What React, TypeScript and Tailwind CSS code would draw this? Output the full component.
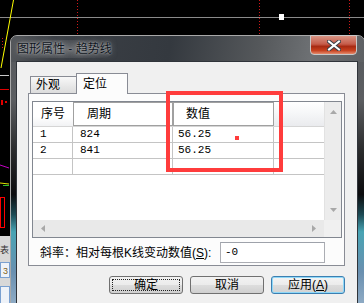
import React from "react";

const cjk = "font-['Liberation_Sans','Noto_Sans_CJK_SC',sans-serif]";

function ChartBackdrop() {
  return (
    <svg className="absolute inset-0" width="364" height="303">
      <line x1="0" y1="17.5" x2="364" y2="17.5" stroke="#8a8a8a" />
      <rect x="279" y="14" width="5" height="6" fill="#ffffff" />
      <line x1="13.5" y1="0" x2="1" y2="68" stroke="#ffff00" />
      <line x1="77.5" y1="0" x2="77.5" y2="34" stroke="#d01818" strokeDasharray="1 2" />
      <line x1="259.5" y1="0" x2="259.5" y2="34" stroke="#d01818" strokeDasharray="1 2" />
      <line x1="349.5" y1="0" x2="349.5" y2="34" stroke="#d01818" strokeDasharray="1 2" />
      <line x1="2.5" y1="38" x2="2.5" y2="48" stroke="#d01818" strokeDasharray="1 2" />
      <line x1="0" y1="75.5" x2="9" y2="75.5" stroke="#c8c8c8" />
      <line x1="0" y1="89.5" x2="9" y2="89.5" stroke="#e00000" />
      <rect x="1" y="100" width="2" height="5" fill="#e00000" />
      <rect x="5" y="101" width="2" height="2" fill="#e00000" />
      <polyline points="0,165 9,168" stroke="#c000c0" fill="none" />
      <polyline points="0,183 9,184" stroke="#e0e000" fill="none" />
      <polyline points="3,185.5 9,185.5" stroke="#30c030" fill="none" />
      <rect x="0.5" y="197.5" width="4" height="30" stroke="#ff0000" fill="none" />
      <rect x="0" y="236" width="10" height="67" fill="#d8d8d8" />
      <text x="0" y="253" fontSize="9" fill="#333" fontFamily="Noto Sans CJK SC">表</text>
      <rect x="0.5" y="262.5" width="9" height="15" stroke="#7aa0d0" fill="#eef2f8" />
      <text x="3" y="274" fontSize="9" fill="#806020" fontFamily="Liberation Sans">3</text>
      <rect x="0.5" y="286.5" width="9" height="17" stroke="#7aa0d0" fill="#eef2f8" />
    </svg>
  );
}

function CloseButton() {
  return (
    <div className="absolute left-[299px] top-[-1px] flex h-[20px] w-[47px] items-center justify-center rounded-b-[4px] border border-[#c8c8c8] bg-[linear-gradient(180deg,#d89484_0%,#c65c4a_45%,#a82a12_58%,#c6401e_80%,#e48a6c_100%)]">
      <svg width="14" height="11" viewBox="0 0 14 11">
        <path d="M2 1.5 L12 9.5 M12 1.5 L2 9.5" stroke="#3a4048" strokeWidth="4" strokeLinecap="square" />
        <path d="M2 1.5 L12 9.5 M12 1.5 L2 9.5" stroke="#ffffff" strokeWidth="2" strokeLinecap="square" />
      </svg>
    </div>
  );
}

function ListView() {
  const rows = [
    ["1", "824", "56.25"],
    ["2", "841", "56.25"],
    ["", "", ""],
  ];
  return (
    <div className="flex h-[137px] w-[310px] border border-[#828790] bg-white">
      <div className="flex w-[291px] flex-col">
        {/* header */}
        <div className="flex h-[25px] border-b border-[#d5d5d5] text-[12px] text-black">
          <div className="flex w-[40px] items-center bg-[linear-gradient(180deg,#ffffff_0%,#ffffff_60%,#f1f2f4_100%)] pl-[8px]">
            序号
          </div>
          <div className="flex w-[100px] items-center border border-[#a0a0a0] bg-white pl-[13px]">
            周期
          </div>
          <div className="flex w-[101px] items-center border border-[#a0a0a0] bg-white pl-[12px]">
            数值
          </div>
          <div className="flex-1 bg-[linear-gradient(180deg,#ffffff_0%,#f7f8f9_40%,#eaebee_100%)]" />
        </div>
        {/* rows */}
        <div className="flex-1">
          {rows.map((r, i) => (
            <div
              key={i}
              className="flex h-[16px] border-b border-[#c4c4c4] font-['Liberation_Mono',monospace] text-[11px] leading-[15px] text-black"
            >
              <div className="w-[40px] border-r border-[#c4c4c4] pl-[7px]">{r[0]}</div>
              <div className="w-[100px] border-r border-[#c4c4c4] pl-[7px]">{r[1]}</div>
              <div className="w-[101px] border-r border-[#c4c4c4] pl-[5px]">{r[2]}</div>
            </div>
          ))}
        </div>
        {/* horizontal scrollbar */}
        <div className="flex h-[17px] items-center justify-between bg-[#e9e9e9] px-[8px]">
          <svg width="4" height="7" viewBox="0 0 4 7">
            <path d="M4 0 L0 3.5 L4 7 Z" fill="#a8a8a8" />
          </svg>
          <svg width="4" height="7" viewBox="0 0 4 7">
            <path d="M0 0 L4 3.5 L0 7 Z" fill="#a8a8a8" />
          </svg>
        </div>
      </div>
      <div className="flex w-[17px] flex-col">
        <div className="flex flex-1 flex-col items-center justify-between border-l border-[#e2e2e2] bg-[#ececec] py-[8px]">
          <svg width="7" height="4" viewBox="0 0 7 4">
            <path d="M0 4 L3.5 0 L7 4 Z" fill="#a8a8a8" />
          </svg>
          <svg width="7" height="4" viewBox="0 0 7 4">
            <path d="M0 0 L3.5 4 L7 0 Z" fill="#a8a8a8" />
          </svg>
        </div>
        <div className="h-[17px] bg-[#f0f0f0]" />
      </div>
    </div>
  );
}

function Button({
  children,
  variant,
}: {
  children: React.ReactNode;
  variant?: "focus" | "default";
}) {
  return (
    <div
      className={`relative flex h-[18px] w-[74px] items-center justify-center rounded-[3px] border text-[12px] text-black ${
        variant === "default"
          ? "border-[#3c7fb1] bg-[linear-gradient(180deg,#f4f4f4_0%,#ebebeb_50%,#dcdcdc_51%,#d2d2d2_100%)] shadow-[inset_0_0_0_1px_#8fd8f8]"
          : "border-[#707070] bg-[linear-gradient(180deg,#f2f2f2_0%,#ebebeb_50%,#dddddd_51%,#cfcfcf_100%)]"
      }`}
    >
      {variant === "focus" && (
        <div className="absolute inset-[2px] border border-dotted border-[#222]" />
      )}
      <span className="relative">{children}</span>
    </div>
  );
}

export default function App() {
  return (
    <div className={`relative h-[303px] w-[364px] overflow-hidden bg-black ${cjk}`}>
      <ChartBackdrop />

      {/* dialog window */}
      <div className="absolute left-[10px] top-[35px] h-[290px] w-[355px] rounded-t-[7px] border border-[#a8a8a8] bg-[linear-gradient(180deg,#56595d_0%,#5c5e61_22%,#2a2b2c_40%,#0c0c0e_55%,#1c4a54_62%,#48a4b4_68%,#6a90b0_82%,#a6bcd2_100%)]">
        <div className="flex h-[26px] items-center rounded-t-[6px] bg-[linear-gradient(100deg,#55585c_0%,#3c4046_12%,#34393f_45%,#55585b_70%,#6e7174_85%,#5d6063_100%)] pl-[6px]">
          <span className="rounded-[8px] bg-[radial-gradient(ellipse_at_center,rgba(200,200,200,0.35)_0%,rgba(200,200,200,0.15)_60%,rgba(200,200,200,0)_100%)] text-[12px] text-[#0e141c] [text-shadow:0_0_2px_rgba(230,230,230,0.7),0_0_6px_rgba(200,200,200,0.6)]">
            图形属性 - 趋势线
          </span>
        </div>
        <CloseButton />

        {/* client area */}
        <div className="ml-[6px] h-[262px] w-[340px] bg-[#f0f0f0] shadow-[0_0_0_1px_#30343a]">
          {/* tabs */}
          <div className="flex h-[32px] items-end pl-[13px]">
            <div className="mb-[1px] flex h-[17px] w-[47px] items-center border border-b-0 border-[#898c95] bg-[linear-gradient(180deg,#f8f8f8_0%,#e8e8e8_55%,#dcdcdc_100%)] pl-[5px] text-[12px] text-black">
              外观
            </div>
            <div className="relative z-10 -ml-[1px] flex h-[21px] w-[52px] items-start border border-b-0 border-[#898c95] bg-[#fcfcfc] pl-[6px] pt-[1px] text-[12px] text-black">
              定位
            </div>
          </div>

          {/* tab panel */}
          <div className="-mt-[1px] ml-[11px] h-[173px] w-[317px] border border-[#898c95] bg-[#fcfcfc] pl-[3px] pt-[7px]">
            <ListView />
            <div className="mt-[4px] flex h-[21px] items-center text-[12px] text-black">
              <div className="w-[188px] pl-[8px]">
                斜率：相对每根K线变动数值(<span className="underline">S</span>):
              </div>
              <div className="flex h-[21px] w-[105px] items-start border border-[#abadb3] border-t-[#9ea2aa] bg-white pl-[4px] pt-[1px] font-['Liberation_Mono',monospace] text-[11px]">
                -0
              </div>
            </div>
          </div>

          {/* buttons */}
          <div className="mt-[10px] flex justify-end gap-[7px] pr-[12px]">
            <Button variant="focus">确定</Button>
            <Button>取消</Button>
            <Button variant="default">
              应用(<span className="underline">A</span>)
            </Button>
          </div>
        </div>
      </div>

      {/* annotation */}
      <div className="absolute left-[166px] top-[91px] h-[81px] w-[117px] border-[4px] border-[#ff3c3c]" />
      <div className="absolute left-[235px] top-[136px] h-[4px] w-[4px] bg-[#ff3c3c]" />
    </div>
  );
}
